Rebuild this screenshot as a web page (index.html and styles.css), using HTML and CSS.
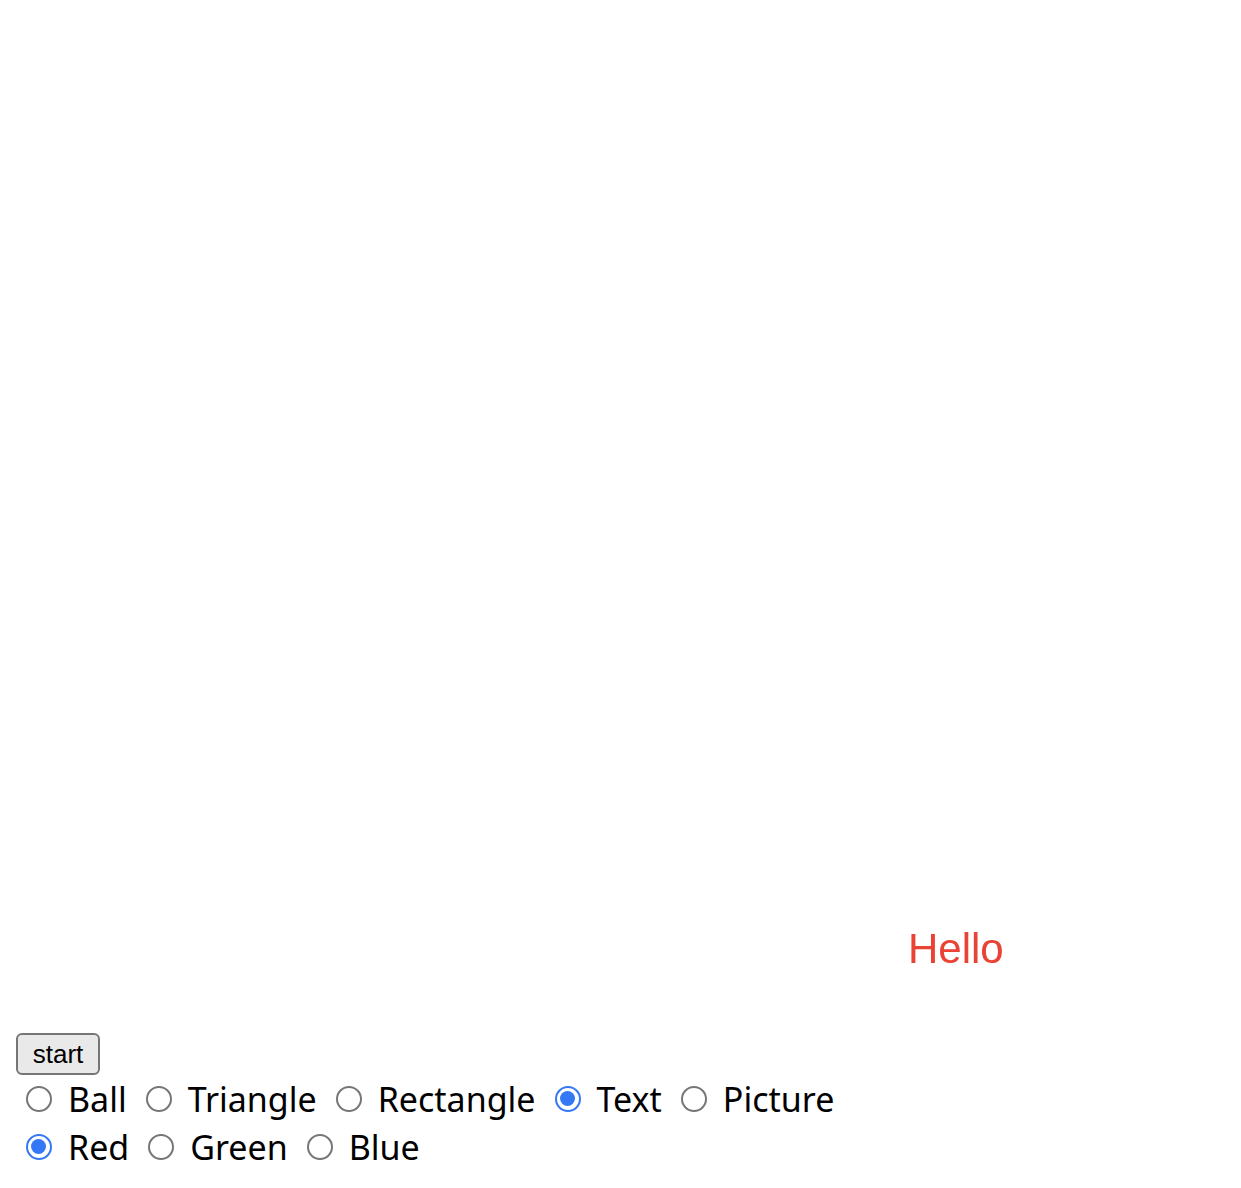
FILE: index.html
```html
<!DOCTYPE html>
<html>
<head>
<meta charset="utf-8">
<link rel="stylesheet" href="styles.css">
</head>
<body>
<div class="stage">
  <span class="hello" style="left:892px; top:912px;">Hello</span>
</div>
<button class="start">start</button>
<div class="row">
  <label class="opt"><input type="radio" name="shape"><span>Ball</span></label>
  <label class="opt"><input type="radio" name="shape"><span>Triangle</span></label>
  <label class="opt"><input type="radio" name="shape"><span>Rectangle</span></label>
  <label class="opt"><input type="radio" name="shape" checked><span>Text</span></label>
  <label class="opt"><input type="radio" name="shape"><span>Picture</span></label>
</div>
<div class="row">
  <label class="opt"><input type="radio" name="color" checked><span>Red</span></label>
  <label class="opt"><input type="radio" name="color"><span>Green</span></label>
  <label class="opt"><input type="radio" name="color"><span>Blue</span></label>
</div>
</body>
</html>
```
FILE: styles.css
```css
html, body {
  background: #fff;
}
body {
  margin: 16px;
  font-family: "Noto Sans", "Liberation Sans", sans-serif;
  color: #000;
}
.stage {
  position: relative;
  height: 1017px;
}
.hello {
  position: absolute;
  font-family: "Liberation Sans", "Noto Sans", sans-serif;
  font-size: 42px;
  line-height: 1;
  color: #ea4335;
  filter: blur(0.5px);
}
.start {
  display: block;
  box-sizing: border-box;
  width: 84px;
  height: 42px;
  margin: 0;
  padding: 0 12px;
  font-family: "Liberation Sans", "Noto Sans", sans-serif;
  font-size: 26px;
  color: #000;
  background: #e9e9e9;
  border: 2px solid #767676;
  border-radius: 6px;
}
.row {
  display: flex;
  align-items: center;
  height: 48px;
}
.opt {
  display: flex;
  align-items: center;
  font-size: 34px;
  line-height: 48px;
}
.opt input {
  appearance: none;
  -webkit-appearance: none;
  box-sizing: border-box;
  width: 26px;
  height: 26px;
  margin: 0 16px 0 10px;
  border: 2px solid #767676;
  border-radius: 50%;
  background: #fff;
  position: relative;
}
.opt input:checked {
  border: 2.5px solid #3478f6;
}
.opt input:checked::after {
  content: "";
  position: absolute;
  left: 3px;
  top: 3px;
  width: 15px;
  height: 15px;
  border-radius: 50%;
  background: #3478f6;
}
.opt span {
  margin-right: 9px;
}
```
